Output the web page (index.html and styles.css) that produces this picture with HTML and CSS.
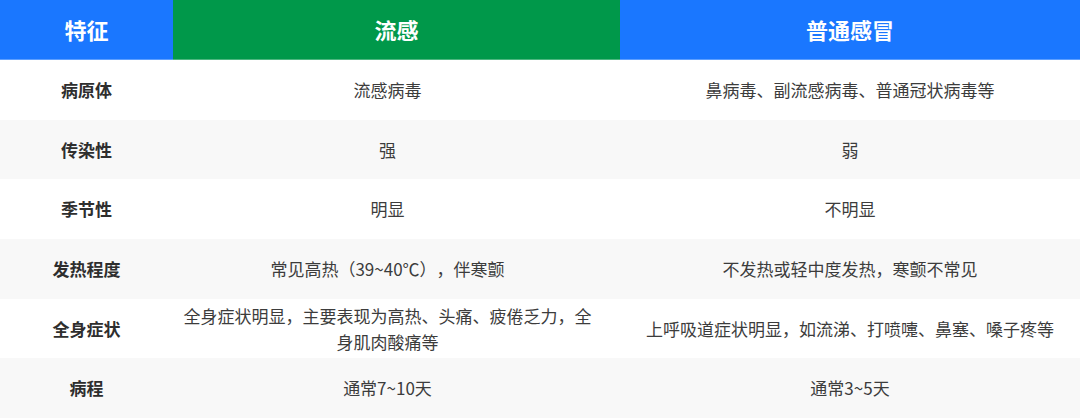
FILE: index.html
```html
<!DOCTYPE html>
<html lang="zh-CN">
<head>
<meta charset="utf-8">
<link rel="stylesheet" href="styles.css">
</head>
<body>
<div class="table">
  <div class="row head">
    <div class="cell h-blue">特征</div>
    <div class="cell mid h-green">流感</div>
    <div class="cell h-blue">普通感冒</div>
  </div>
  <div class="row">
    <div class="cell key">病原体</div>
    <div class="cell mid">流感病毒</div>
    <div class="cell">鼻病毒、副流感病毒、普通冠状病毒等</div>
  </div>
  <div class="row alt">
    <div class="cell key">传染性</div>
    <div class="cell mid">强</div>
    <div class="cell">弱</div>
  </div>
  <div class="row">
    <div class="cell key">季节性</div>
    <div class="cell mid">明显</div>
    <div class="cell">不明显</div>
  </div>
  <div class="row alt">
    <div class="cell key">发热程度</div>
    <div class="cell mid">常见高热（39~40℃），伴寒颤</div>
    <div class="cell">不发热或轻中度发热，寒颤不常见</div>
  </div>
  <div class="row">
    <div class="cell key">全身症状</div>
    <div class="cell mid">全身症状明显，主要表现为高热、头痛、疲倦乏力，全身肌肉酸痛等</div>
    <div class="cell">上呼吸道症状明显，如流涕、打喷嚏、鼻塞、嗓子疼等</div>
  </div>
  <div class="row alt">
    <div class="cell key">病程</div>
    <div class="cell mid">通常7~10天</div>
    <div class="cell">通常3~5天</div>
  </div>
</div>
</body>
</html>
```
FILE: styles.css
```css
html, body {
  margin: 0;
  padding: 0;
  background: #ffffff;
}
body {
  font-family: "Noto Sans CJK SC", "Noto Sans", sans-serif;
  color: #3c3c3c;
  text-spacing-trim: space-all;
}
.table {
  width: 1080px;
  height: 418px;
  display: flex;
  flex-direction: column;
}
.row {
  flex: 1;
  display: grid;
  grid-template-columns: 173px 447px 460px;
  background: #ffffff;
}
.row.alt {
  background: #f8f8f8;
}
.row.head {
  flex: 0 0 60px;
}
.cell {
  display: flex;
  align-items: center;
  justify-content: center;
  text-align: center;
  padding: 0 15px;
  font-size: 17px;
  line-height: 26px;
}
.cell.mid {
  padding: 0 23px 0 5px;
}
.head .cell {
  color: #ffffff;
  font-size: 22px;
  font-weight: 700;
  box-sizing: border-box;
  padding-bottom: 1px;
}
.head .cell.mid {
  padding: 0 0 1px 0;
}
.h-blue {
  background: #1a77ff;
  border-bottom: 1px solid #5d9fff;
}
.h-green {
  background: #00984a;
  border-bottom: 1px solid #4db680;
}
.key {
  font-weight: 700;
  color: #2e2e2e;
}
```
